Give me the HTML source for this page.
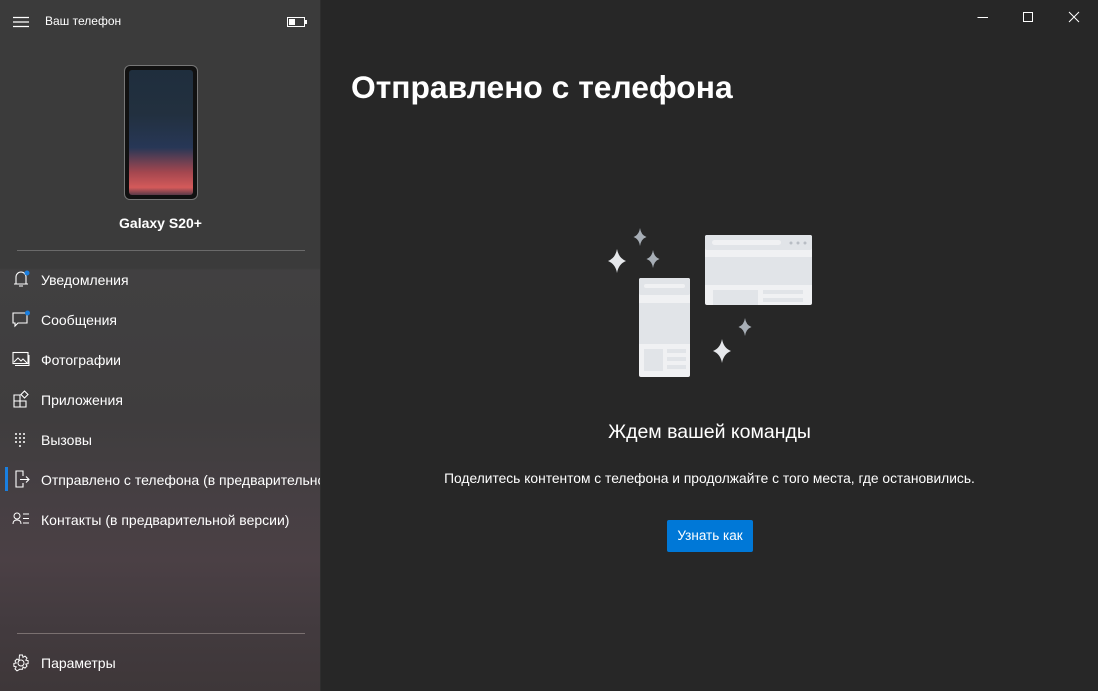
<!DOCTYPE html>
<html><head><meta charset="utf-8"><style>
*{margin:0;padding:0;box-sizing:border-box}
body{width:1098px;height:691px;background:#272727;font-family:"Segoe UI","Liberation Sans","Noto Sans CJK SC",sans-serif;color:#fff;position:relative;overflow:hidden}
.side{position:absolute;left:0;top:0;width:321px;height:691px;background:linear-gradient(180deg,#3b3b3b 0,#3b3b3b 268px,#414041 270px,#3f3d3e 420px,#463f43 500px,#4b4045 560px,#433b3f 620px,#3e3739 691px);border-right:1px solid #2e2e2e;overflow:hidden}
.t{position:absolute;white-space:nowrap}
.nav{position:absolute;left:41px;font-size:14px;color:#fff;white-space:nowrap;width:280px;overflow:hidden}
.ic{position:absolute;left:12px}
.sep{position:absolute;left:17px;width:288px;height:1px;background:#6a6a6a}
</style></head><body>
<div class="side">
 <svg class="ic" style="left:13px;top:15px" width="16" height="14"><path d="M0 2.5H16M0 7H16M0 11.5H16" stroke="#fff" stroke-width="1.2"/></svg>
 <div class="t" style="left:45px;top:14px;font-size:12px">Ваш телефон</div>
 <svg style="position:absolute;left:287px;top:17px" width="20" height="10"><rect x="0.5" y="0.5" width="17" height="9" fill="none" stroke="#fff"/><rect x="2" y="2" width="6" height="6" fill="#fff"/><rect x="18" y="3" width="2" height="4" fill="#fff"/></svg>
 <div style="position:absolute;left:124px;top:65px;width:74px;height:135px;border-radius:6px;background:#111;border:1.5px solid #777;padding:4px">
  <div style="width:100%;height:100%;border-radius:3px;background:linear-gradient(180deg,#1f2e3d 0,#22303f 35%,#273756 62%,#a5474f 82%,#d45a5a 94%,#5a3a48 100%)"></div>
 </div>
 <div class="t" style="left:0;width:321px;text-align:center;top:215px;font-size:14px;font-weight:bold">Galaxy S20+</div>
 <div class="sep" style="top:250px"></div>
 <svg class="ic" style="top:270px" width="18" height="18"><path d="M4 14V7a5 5 0 0 1 10 0v7M2 14H16M7 16h4" stroke="#fff" fill="none" stroke-width="1.1"/><circle cx="15" cy="3" r="2.5" fill="#1a7fe0"/></svg>
 <div class="nav" style="top:272px">Уведомления</div>
 <svg class="ic" style="top:310px" width="18" height="18"><path d="M1 3H15V13H6L3 16V13H1Z" stroke="#fff" fill="none" stroke-width="1.1"/><circle cx="15.5" cy="3" r="2.5" fill="#1a7fe0"/></svg>
 <div class="nav" style="top:312px">Сообщения</div>
 <svg class="ic" style="top:351px" width="18" height="16"><rect x="1" y="1.5" width="15" height="11" stroke="#fff" fill="none" stroke-width="1.1"/><path d="M2 11l4-4 3 3 2-2 4 4M3 14.5H17V4" stroke="#fff" fill="none" stroke-width="1"/></svg>
 <div class="nav" style="top:352px">Фотографии</div>
 <svg class="ic" style="top:390px" width="18" height="18"><path d="M2 5H8V11H2ZM2 11H8V17H2ZM8 11H14V17H8Z" stroke="#fff" fill="none" stroke-width="1.1"/><path d="M12.5 1L16 4.5 12.5 8 9 4.5Z" stroke="#fff" fill="none" stroke-width="1.1"/></svg>
 <div class="nav" style="top:392px">Приложения</div>
 <svg class="ic" style="top:432px" width="18" height="16"><g fill="#fff"><circle cx="4" cy="2" r="1"/><circle cx="8" cy="2" r="1"/><circle cx="12" cy="2" r="1"/><circle cx="4" cy="6" r="1"/><circle cx="8" cy="6" r="1"/><circle cx="12" cy="6" r="1"/><circle cx="4" cy="10" r="1"/><circle cx="8" cy="10" r="1"/><circle cx="12" cy="10" r="1"/><circle cx="8" cy="14" r="1"/></g></svg>
 <div class="nav" style="top:432px">Вызовы</div>
 <div style="position:absolute;left:5px;top:467px;width:3px;height:24px;background:#1a7fe0"></div>
 <svg class="ic" style="left:14px;top:470px" width="18" height="18"><path d="M9 6V1H2V17H9V13" stroke="#fff" fill="none" stroke-width="1.1"/><path d="M6 9.5H15M12 6.5l3 3-3 3" stroke="#fff" fill="none" stroke-width="1.1"/></svg>
 <div class="nav" style="top:472px">Отправлено с телефона (в предварительной версии)</div>
 <svg class="ic" style="top:512px" width="18" height="14"><circle cx="5" cy="4" r="3" stroke="#fff" fill="none"/><path d="M1 12c0-3 2-4 4-4s4 1 4 4M11 2H17M11 6.5H17M11 11H17" stroke="#fff" fill="none"/></svg>
 <div class="nav" style="top:512px">Контакты (в предварительной версии)</div>
 <div class="sep" style="top:633px;background:#7a7070"></div>
 <svg class="ic" style="top:654px" width="18" height="18"><circle cx="9" cy="9" r="3" stroke="#fff" fill="none"/><path d="M7.5 1h3l.5 2.3 2-1.2 2 2-1.2 2 2.3.5v3l-2.3.5 1.2 2-2 2-2-1.2-.5 2.3h-3L7 15.7l-2 1.2-2-2 1.2-2L1.9 12.4v-3L4.2 9 3 7l2-2 2 1.2Z" stroke="#fff" fill="none" stroke-width="1"/></svg>
 <div class="nav" style="top:655px">Параметры</div>
</div>
<svg style="position:absolute;left:977px;top:10px" width="110" height="16"><path d="M0.5 7.5H11" stroke="#fff"/><rect x="46.5" y="2.5" width="9" height="9" stroke="#fff" fill="none"/><path d="M92 2l10 10M102 2l-10 10" stroke="#fff"/></svg>
<div class="t" style="left:351px;top:69px;font-size:31.8px;font-weight:bold">Отправлено с телефона</div>
<svg style="position:absolute;left:600px;top:225px" width="220" height="160">
 <g transform="translate(-600,-225)">
 <path d="M617 249Q618.5 258 626 261Q618.5 264 617 273Q615.5 264 608 261Q615.5 258 617 249Z" fill="#e6e8eb"/>
 <path d="M640 228Q641 235 646.5 237Q641 239 640 246Q639 239 633.5 237Q639 235 640 228Z" fill="#a7aeb6"/>
 <path d="M653 250Q654 257 659.5 259Q654 261 653 268Q652 261 646.5 259Q652 257 653 250Z" fill="#a7aeb6"/>
 <path d="M745 318Q746 325 751.5 327Q746 329 745 336Q744 329 738.5 327Q744 325 745 318Z" fill="#a7aeb6"/>
 <path d="M722 339Q723.5 348 731 351Q723.5 354 722 363Q720.5 354 713 351Q720.5 348 722 339Z" fill="#e6e8eb"/>
 <rect x="705" y="235" width="107" height="70" rx="2" fill="#f0f1f3"/>
 <rect x="705" y="235" width="107" height="15" rx="2" fill="#e1e4e8"/>
 <rect x="712" y="240" width="69" height="5" rx="2.5" fill="#f0f1f3"/>
 <g fill="#b8bdc4"><circle cx="791" cy="243" r="1.5"/><circle cx="798" cy="243" r="1.5"/><circle cx="805" cy="243" r="1.5"/></g>
 <rect x="705" y="257" width="107" height="28" fill="#e1e4e8"/>
 <rect x="713" y="290" width="45" height="15" fill="#e1e4e8"/>
 <rect x="763" y="290" width="40" height="4" fill="#e1e4e8"/><rect x="763" y="298" width="40" height="4" fill="#e1e4e8"/>
 <rect x="639" y="278" width="51" height="99" rx="2" fill="#f0f1f3"/>
 <rect x="639" y="278" width="51" height="17" rx="2" fill="#e1e4e8"/>
 <rect x="644" y="284" width="41" height="4" rx="2" fill="#f0f1f3"/>
 <rect x="639" y="303" width="51" height="41" fill="#e1e4e8"/>
 <rect x="644" y="349" width="19" height="22" fill="#e1e4e8"/>
 <rect x="667" y="349" width="19" height="4" fill="#e1e4e8"/><rect x="667" y="357" width="19" height="4" fill="#e1e4e8"/><rect x="667" y="365" width="19" height="4" fill="#e1e4e8"/>
 </g>
</svg>
<div class="t" style="left:321px;width:777px;text-align:center;top:421px;font-size:19.5px">Ждем вашей команды</div>
<div class="t" style="left:321px;width:777px;text-align:center;top:471px;font-size:13.8px">Поделитесь контентом с телефона и продолжайте с того места, где остановились.</div>
<div style="position:absolute;left:667px;top:520px;width:86px;height:32px;background:#0078d7;border-radius:2px;font-size:13.5px;text-align:center;line-height:32px">Узнать как</div>
</body></html>
